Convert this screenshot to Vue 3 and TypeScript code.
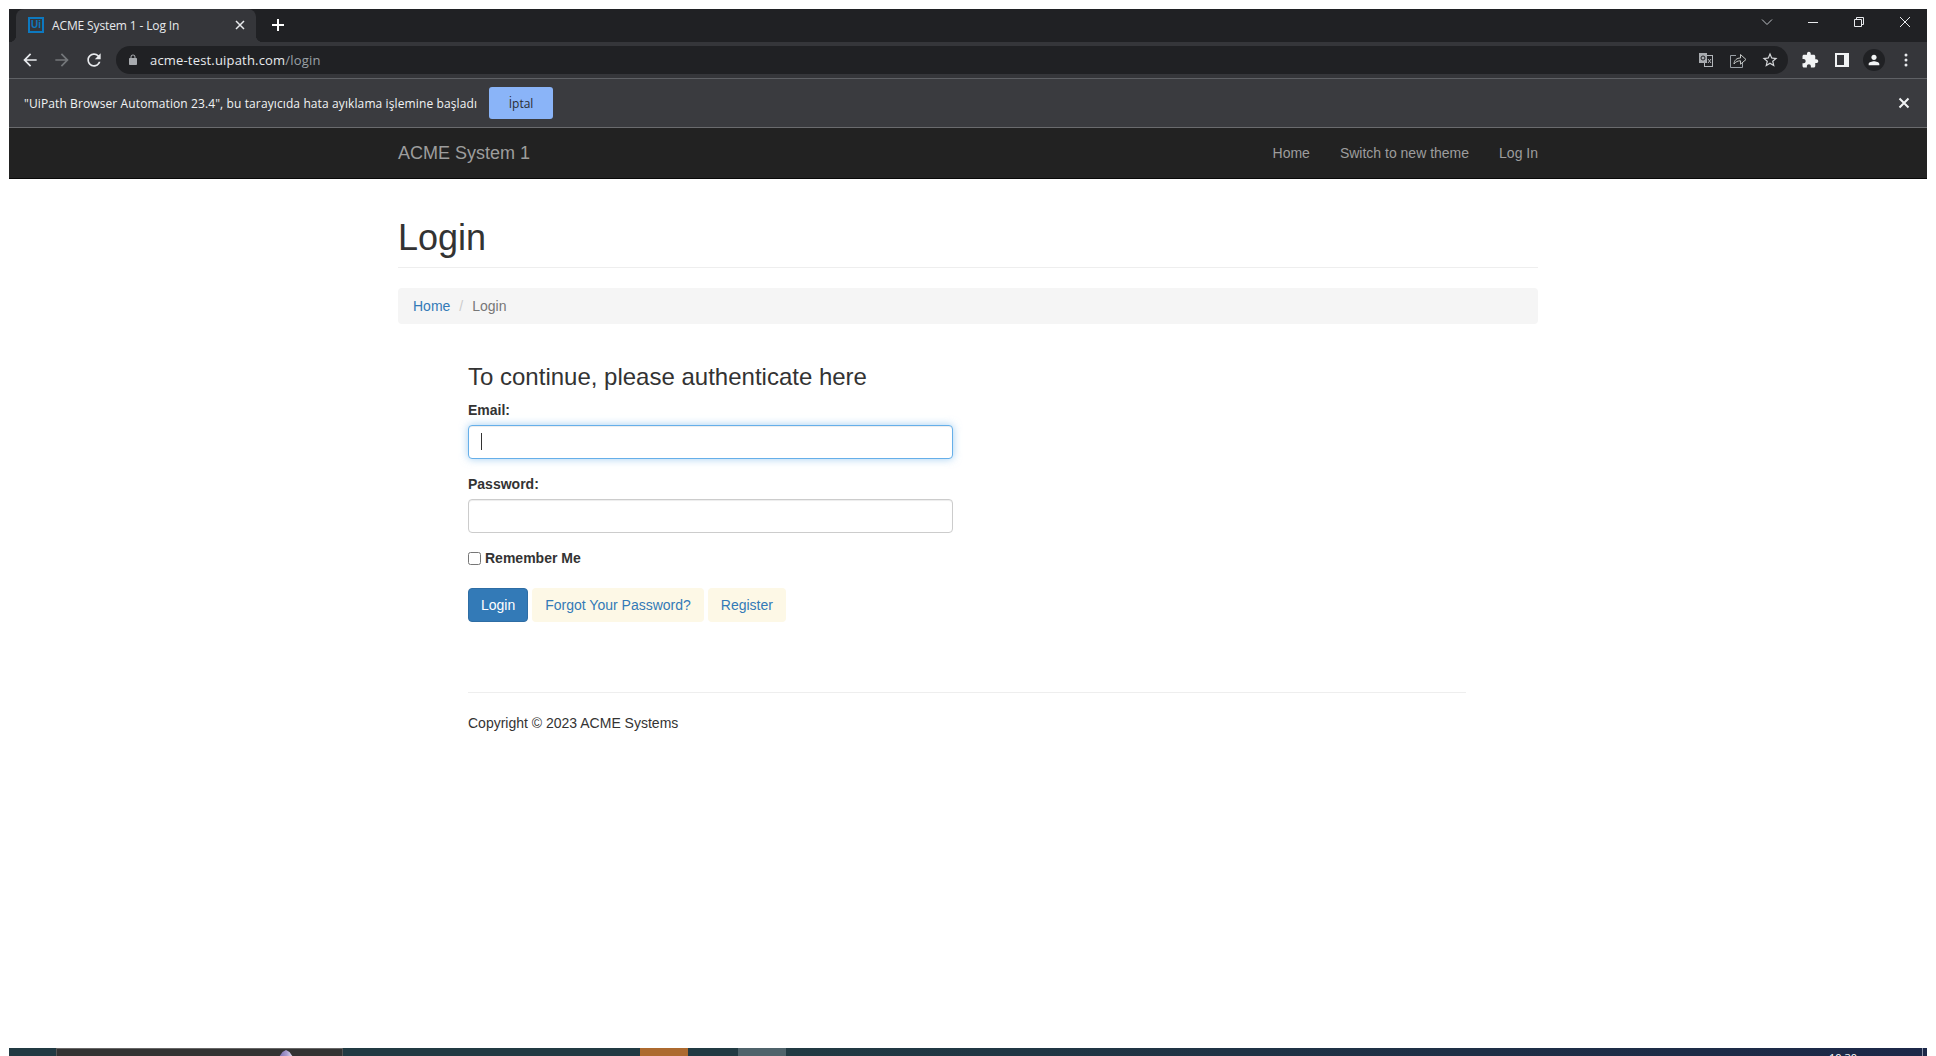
<script setup lang="ts">
const navLinks = ['Home', 'Switch to new theme', 'Log In']
</script>

<template>
  <div class="screen">
    <div class="browser">
      <div class="tab-strip">
        <div class="tab">
          <span class="favicon">Ui</span>
          <span class="tab-title">ACME System 1 - Log In</span>
          <svg class="tab-close" width="16" height="16" viewBox="0 0 16 16">
            <path d="M4 4l8 8M12 4l-8 8" stroke="#e8eaed" stroke-width="1.5" fill="none" />
          </svg>
        </div>
        <svg class="new-tab" width="16" height="16" viewBox="0 0 16 16">
          <path d="M8 2v12M2 8h12" stroke="#fff" stroke-width="2" fill="none" />
        </svg>
        <div class="window-controls">
          <span class="win-btn">
            <svg width="12" height="12" viewBox="0 0 12 12">
              <path d="M1 3.5l5 5 5-5" stroke="#bdc1c6" fill="none" />
            </svg>
          </span>
          <span class="win-btn">
            <svg width="12" height="12" viewBox="0 0 12 12">
              <path d="M1 6.5h10" stroke="#e8eaed" fill="none" />
            </svg>
          </span>
          <span class="win-btn">
            <svg width="12" height="12" viewBox="0 0 12 12">
              <path d="M1.5 3.5h7v7h-7zM3.5 3.5v-2h7v7h-2" stroke="#e8eaed" fill="none" />
            </svg>
          </span>
          <span class="win-btn">
            <svg width="12" height="12" viewBox="0 0 12 12">
              <path d="M1 1l10 10M11 1L1 11" stroke="#e8eaed" fill="none" />
            </svg>
          </span>
        </div>
      </div>

      <div class="toolbar">
        <span class="tool">
          <svg width="20" height="20" viewBox="0 0 24 24">
            <path fill="#e8eaed" d="M20 11H7.83l5.59-5.59L12 4l-8 8 8 8 1.41-1.41L7.83 13H20v-2z" />
          </svg>
        </span>
        <span class="tool">
          <svg width="20" height="20" viewBox="0 0 24 24">
            <path fill="#74777a" d="M4 11h12.17l-5.59-5.59L12 4l8 8-8 8-1.41-1.41L16.17 13H4v-2z" />
          </svg>
        </span>
        <span class="tool">
          <svg width="20" height="20" viewBox="0 0 24 24">
            <path
              fill="#e8eaed"
              d="M17.65 6.35C16.2 4.9 14.21 4 12 4c-4.42 0-7.99 3.58-7.99 8s3.57 8 7.99 8c3.73 0 6.84-2.55 7.73-6h-2.08c-.82 2.33-3.04 4-5.65 4-3.31 0-6-2.69-6-6s2.69-6 6-6c1.66 0 3.14.69 4.22 1.78L13 11h7V4l-2.35 2.35z"
            />
          </svg>
        </span>
        <div class="omnibox">
          <svg class="lock" width="12" height="12" viewBox="0 0 24 24">
            <path
              fill="#a8abaf"
              d="M18 8h-1V6c0-2.76-2.24-5-5-5S7 3.24 7 6v2H6c-1.1 0-2 .9-2 2v10c0 1.1.9 2 2 2h12c1.1 0 2-.9 2-2V10c0-1.1-.9-2-2-2zM9 6c0-1.66 1.34-3 3-3s3 1.34 3 3v2H9V6z"
            />
          </svg>
          <span class="url">acme-test.uipath.com<span class="url-path">/login</span></span>
          <span class="tool push">
            <svg width="16" height="16" viewBox="0 0 16 16">
              <rect x="6.5" y="3.5" width="8" height="11" fill="none" stroke="#b4b7bb" />
              <rect x="1" y="1" width="8" height="10" fill="#a8abaf" />
              <circle cx="5" cy="6" r="2" fill="none" stroke="#202124" />
              <path d="M10 7l3 4M13 7l-3 4" stroke="#b4b7bb" fill="none" />
            </svg>
          </span>
          <span class="tool">
            <svg width="18" height="18" viewBox="0 0 18 18">
              <path d="M7 4.5H1.5v12h12V11" stroke="#9aa0a6" fill="none" />
              <path d="M5 13c.3-4 2.8-6 6.5-6V3.5l5.500 5-5.500 4.700V9.800c-2.700 0-4.800.9-6.500 3.200z" stroke="#c4c7c5" fill="none" />
            </svg>
          </span>
          <span class="tool">
            <svg width="18" height="18" viewBox="0 0 24 24">
              <path
                fill="#d5d7da"
                d="M22 9.24l-7.19-.62L12 2 9.190 8.630 2 9.240l5.460 4.730L5.820 21 12 17.270 18.180 21l-1.630-7.030L22 9.240zM12 15.400l-3.760 2.270 1-4.280-3.320-2.880 4.380-.38L12 6.100l1.710 4.040 4.380.38-3.320 2.880 1 4.280L12 15.400z"
              />
            </svg>
          </span>
        </div>
        <span class="tool">
          <svg width="18" height="18" viewBox="0 0 24 24">
            <path
              fill="#f1f3f4"
              d="M20.5 11H19V7c0-1.1-.9-2-2-2h-4V3.5C13 2.12 11.88 1 10.5 1S8 2.12 8 3.5V5H4c-1.1 0-1.99.9-1.99 2v3.8H3.5c1.49 0 2.7 1.21 2.7 2.7s-1.21 2.7-2.7 2.7H2V20c0 1.1.9 2 2 2h3.8v-1.5c0-1.49 1.21-2.7 2.7-2.7 1.49 0 2.7 1.21 2.7 2.7V22H17c1.1 0 2-.9 2-2v-4h1.5c1.38 0 2.5-1.12 2.5-2.5S21.88 11 20.5 11z"
            />
          </svg>
        </span>
        <span class="tool">
          <svg width="14" height="14" viewBox="0 0 14 14">
            <path fill="#f1f3f4" fill-rule="evenodd" d="M0 0h14v14H0zM2 2v10h7V2z" />
          </svg>
        </span>
        <span class="tool">
          <span class="avatar">
            <svg width="16" height="16" viewBox="0 0 24 24">
              <path
                fill="#f1f3f4"
                d="M12 12c2.21 0 4-1.79 4-4s-1.79-4-4-4-4 1.79-4 4 1.79 4 4 4zm0 2c-2.67 0-8 1.34-8 4v2h16v-2c0-2.66-5.33-4-8-4z"
              />
            </svg>
          </span>
        </span>
        <span class="tool">
          <svg width="4" height="14" viewBox="0 0 4 14">
            <circle cx="2" cy="2" r="1.5" fill="#e8eaed" />
            <circle cx="2" cy="7" r="1.5" fill="#e8eaed" />
            <circle cx="2" cy="12" r="1.5" fill="#e8eaed" />
          </svg>
        </span>
      </div>

      <div class="infobar">
        <span class="info-text">"UiPath Browser Automation 23.4", bu tarayıcıda hata ayıklama işlemine başladı</span>
        <button class="cancel">İptal</button>
        <svg class="info-close" width="12" height="12" viewBox="0 0 12 12">
          <path d="M1.5 1.5l9 9M10.5 1.5l-9 9" stroke="#f1f3f4" stroke-width="2" fill="none" />
        </svg>
      </div>

      <nav class="navbar">
        <div class="container nav-inner">
          <a class="brand">ACME System 1</a>
          <ul class="nav-links">
            <li v-for="link in navLinks" :key="link">{{ link }}</li>
          </ul>
        </div>
      </nav>

      <main class="container page">
        <h1 class="page-title">Login</h1>
        <ol class="breadcrumb">
          <li class="crumb-link">Home</li>
          <li class="crumb-sep">/</li>
          <li class="crumb-current">Login</li>
        </ol>

        <section class="content">
          <form class="login-form" @submit.prevent>
            <h2 class="form-title">To continue, please authenticate here</h2>
            <div class="field">
              <label for="email">Email:</label>
              <div class="input-wrap">
                <input id="email" class="input focused" type="text" />
                <span class="caret"></span>
              </div>
            </div>
            <div class="field">
              <label for="password">Password:</label>
              <input id="password" class="input" type="password" />
            </div>
            <label class="remember">
              <input type="checkbox" />
              Remember Me
            </label>
            <div class="actions">
              <button class="btn btn-primary">Login</button>
              <a class="btn btn-soft">Forgot Your Password?</a>
              <a class="btn btn-soft">Register</a>
            </div>
          </form>
          <footer class="footer">Copyright © 2023 ACME Systems</footer>
        </section>
      </main>
    </div>

    <div class="taskbar">
      <span class="seg seg-start"></span>
      <span class="seg seg-active">
        <span class="thumb"></span>
      </span>
      <span class="seg seg-a"></span>
      <span class="seg seg-orange"></span>
      <span class="seg seg-b"></span>
      <span class="seg seg-slate"></span>
      <span class="seg seg-rest">
        <span class="clock">10:30</span>
        <span class="desk-edge"></span>
      </span>
    </div>
  </div>
</template>

<style>
html,
body {
  margin: 0;
  background: #fff;
}
</style>

<style scoped>
.screen {
  height: 1056px;
  padding: 9px 9px 0;
  box-sizing: border-box;
  display: flex;
  flex-direction: column;
  overflow: hidden;
  font-family: 'Liberation Sans', Arial, sans-serif;
  font-size: 14px;
  color: #333;
}

.browser {
  flex: 1;
  min-height: 0;
  background: #fff;
}

.tab-strip {
  height: 33px;
  background: #202124;
  display: flex;
  align-items: center;
}

.tab {
  position: relative;
  width: 240px;
  height: 33px;
  margin-left: 7px;
  box-sizing: border-box;
  padding: 0 0 1px 12px;
  background: #35363a;
  border-radius: 8px 8px 0 0;
  display: flex;
  align-items: center;
}

.tab::before,
.tab::after {
  content: '';
  position: absolute;
  bottom: 0;
  width: 7px;
  height: 7px;
}

.tab::before {
  left: -7px;
  background: radial-gradient(circle at 0 0, #202124 7px, #35363a 7.5px);
}

.tab::after {
  right: -7px;
  background: radial-gradient(circle at 100% 0, #202124 7px, #35363a 7.5px);
}

.favicon {
  width: 16px;
  height: 16px;
  box-sizing: border-box;
  border: 2px solid #0d79c0;
  color: #0d79c0;
  font: 700 10px/12px 'Liberation Sans', sans-serif;
  text-align: center;
}

.tab-title {
  margin-left: 8px;
  font: 12px 'Open Sans', sans-serif;
  letter-spacing: -0.13px;
  color: #e8eaed;
  white-space: nowrap;
}

.tab-close {
  margin-left: auto;
  margin-right: 8px;
}

.new-tab {
  margin: 0 0 2px 14px;
}

.window-controls {
  margin-left: auto;
  display: flex;
  height: 100%;
}

.win-btn {
  width: 46px;
  display: flex;
  align-items: center;
  justify-content: center;
  padding: 0 0 7px 2px;
  box-sizing: border-box;
}

.toolbar {
  height: 37px;
  box-sizing: border-box;
  padding: 0 5px;
  background: #35363a;
  border-bottom: 1px solid #5f6165;
  display: flex;
  align-items: center;
}

.tool {
  width: 32px;
  height: 28px;
  flex: none;
  display: flex;
  align-items: center;
  justify-content: center;
}

.omnibox {
  flex: 1;
  height: 28px;
  margin: 0 6px;
  padding: 0 2px 0 11px;
  background: #202124;
  border-radius: 14px;
  display: flex;
  align-items: center;
}

.url {
  margin-left: 11px;
  font: 13px 'Open Sans', sans-serif;
  letter-spacing: 0.18px;
  color: #e8eaed;
}

.url-path {
  color: #9aa0a6;
}

.push {
  margin-left: auto;
}

.avatar {
  width: 22px;
  height: 22px;
  border-radius: 50%;
  background: #202124;
  display: flex;
  align-items: center;
  justify-content: center;
}

.infobar {
  height: 49px;
  box-sizing: border-box;
  padding: 0 17px 0 15px;
  background: #3a3b3f;
  border-bottom: 1px solid #6a6b6e;
  display: flex;
  align-items: center;
}

.info-text {
  font: 12px 'Open Sans', sans-serif;
  letter-spacing: 0.11px;
  color: #f1f3f4;
  white-space: nowrap;
}

.cancel {
  width: 64px;
  height: 32px;
  margin-left: 12px;
  padding: 0;
  border: 0;
  border-radius: 3px;
  background: #8ab4f8;
  color: #2a2d33;
  font: 500 12px 'Open Sans', sans-serif;
}

.info-close {
  margin-left: auto;
}

.navbar {
  height: 51px;
  box-sizing: border-box;
  background: #222;
  border-bottom: 1px solid #080808;
}

.container {
  width: 1140px;
  margin: 0 auto;
}

.nav-inner {
  height: 50px;
  display: flex;
  align-items: center;
  justify-content: space-between;
}

.brand {
  font-size: 18px;
  color: #9d9d9d;
}

.nav-links {
  margin: 0;
  padding: 0;
  list-style: none;
  display: flex;
  gap: 30px;
  color: #9d9d9d;
}

.page-title {
  margin: 39px 0 20px;
  padding-bottom: 9px;
  border-bottom: 1px solid #eee;
  font-size: 36px;
  font-weight: 500;
  line-height: 40px;
}

.breadcrumb {
  margin: 0 0 20px;
  padding: 8px 15px;
  list-style: none;
  display: flex;
  background: #f5f5f5;
  border-radius: 4px;
  line-height: 20px;
}

.crumb-link {
  color: #337ab7;
}

.crumb-sep {
  padding: 0 9px;
  color: #ccc;
}

.crumb-current {
  color: #777;
}

.content {
  margin-left: 70px;
  width: 998px;
}

.login-form {
  width: 485px;
  padding-top: 20px;
}

.form-title {
  margin: 0 0 10px;
  font-size: 24px;
  font-weight: 500;
  line-height: 26px;
}

.field {
  margin-bottom: 15px;
}

label {
  display: block;
  margin-bottom: 5px;
  font-weight: 700;
  line-height: 20px;
}

.input-wrap {
  position: relative;
}

.input {
  display: block;
  width: 100%;
  height: 34px;
  box-sizing: border-box;
  padding: 6px 12px;
  border: 1px solid #ccc;
  border-radius: 4px;
  outline: 0;
  box-shadow: inset 0 1px 1px rgba(0, 0, 0, 0.075);
}

.focused {
  border-color: #66afe9;
  box-shadow:
    inset 0 1px 1px rgba(0, 0, 0, 0.075),
    0 0 8px rgba(102, 175, 233, 0.6);
}

.caret {
  position: absolute;
  left: 13px;
  top: 8px;
  width: 1px;
  height: 17px;
  background: #333;
}

.remember {
  display: flex;
  align-items: center;
  margin: 0 0 20px;
}

.remember input {
  margin: 0 4px 0 0;
}

.actions {
  display: flex;
  gap: 4px;
}

.btn {
  height: 34px;
  box-sizing: border-box;
  padding: 6px 12px;
  border: 1px solid transparent;
  border-radius: 4px;
  font-family: inherit;
  font-size: 14px;
  line-height: 20px;
}

.btn-primary {
  background: #337ab7;
  border-color: #2e6da4;
  color: #fff;
}

.btn-soft {
  background: #fdf8e6;
  color: #337ab7;
}

.footer {
  margin-top: 70px;
  padding-top: 20px;
  border-top: 1px solid #eee;
  line-height: 20px;
}

.taskbar {
  height: 8px;
  flex: none;
  display: flex;
  background: #213a43;
}

.seg {
  display: block;
  flex: none;
}

.seg-start {
  width: 47px;
}

.seg-active {
  position: relative;
  width: 287px;
  box-sizing: border-box;
  background: #333;
  border-top: 1px solid #666;
  border-left: 1px solid #555;
  border-right: 1px solid #555;
}

.thumb {
  position: absolute;
  left: 222px;
  top: 1px;
  width: 14px;
  height: 7px;
  clip-path: polygon(50% 0, 75% 30%, 100% 100%, 0 100%, 25% 30%);
  background: linear-gradient(90deg, #7b6fb0, #a79ccf 55%, #e8e6f2);
}

.seg-a {
  width: 297px;
}

.seg-orange {
  width: 48px;
  background: #ad6a2f;
}

.seg-b {
  width: 50px;
}

.seg-slate {
  width: 48px;
  background: #4f636b;
}

.seg-rest {
  position: relative;
  flex: 1;
  overflow: hidden;
  background: linear-gradient(90deg, #213a43, #1c2848);
}

.clock {
  position: absolute;
  left: 1043px;
  top: 4px;
  color: #fff;
  font: 11px/12px 'Open Sans', sans-serif;
}

.desk-edge {
  position: absolute;
  right: 4px;
  top: 0;
  width: 1px;
  height: 8px;
  background: #8a93a8;
}
</style>
